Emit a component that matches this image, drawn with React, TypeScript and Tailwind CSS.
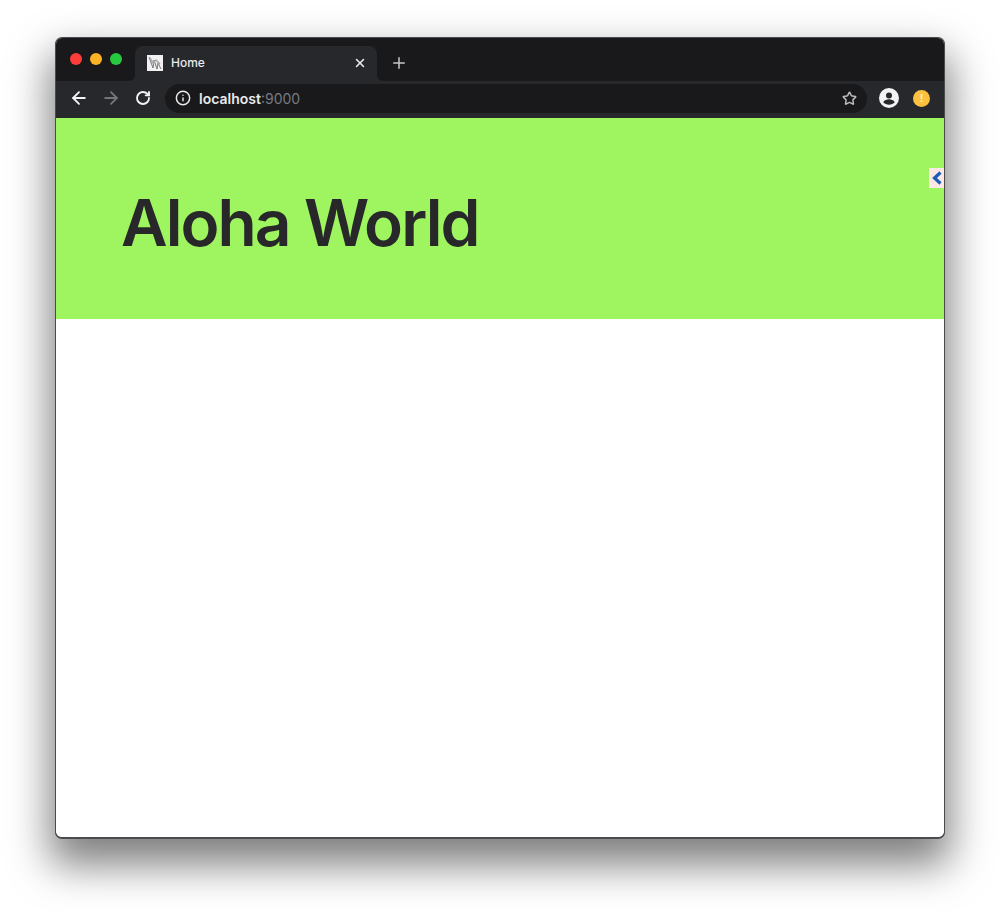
import { ArrowLeft, ArrowRight, Info, Plus, RotateCw, Star, X } from "lucide-react";

function Favicon() {
  return (
    <svg width="16" height="16" viewBox="0 0 16 16" className="shrink-0">
      <rect width="16" height="16" fill="#f1f1f1" />
      <path d="M2 2l4 11 1-8 3 9 1-6 3 6" fill="none" stroke="#777" strokeWidth="1" />
      <path d="M3 3l3 5 3-3 4 4" fill="none" stroke="#aaa" strokeWidth="1.5" />
    </svg>
  );
}

function TabStrip() {
  return (
    <div className="flex h-[43px] bg-[#19191b] rounded-t-[6px]">
      <div className="flex items-center gap-[8px] pl-[13.5px] pb-[2px] w-[79px] shrink-0">
        <span className="h-[12px] w-[12px] rounded-full bg-[#fc3d39]" />
        <span className="h-[12px] w-[12px] rounded-full bg-[#fdb225]" />
        <span className="h-[12px] w-[12px] rounded-full bg-[#27c93f]" />
      </div>
      <div className="relative mt-[8px] flex h-[35px] w-[242px] items-center rounded-t-[8px] bg-[#27282c] pb-[2px] pl-[12px] pr-[10px]">
        <div className="absolute bottom-0 left-[-6px] h-[6px] w-[6px] bg-[#27282c]">
          <div className="h-full w-full rounded-br-[6px] bg-[#19191b]" />
        </div>
        <div className="absolute bottom-0 right-[-6px] h-[6px] w-[6px] bg-[#27282c]">
          <div className="h-full w-full rounded-bl-[6px] bg-[#19191b]" />
        </div>
        <Favicon />
        <span className="ml-[8px] font-['Inter',sans-serif] text-[12px] font-medium text-[#e8eaed]">Home</span>
        <X className="ml-auto h-[14px] w-[14px] text-[#e8eaed]" strokeWidth={2.6} />
      </div>
      <div className="ml-[13px] mt-[16px] h-[18px]">
        <Plus className="h-[18px] w-[18px] text-[#c4c7cc]" strokeWidth={2} />
      </div>
    </div>
  );
}

function Toolbar() {
  return (
    <div className="flex h-[37px] items-center bg-[#27282c] pb-[3px]">
      <div className="flex w-[109px] shrink-0 items-center pl-[13px]">
        <ArrowLeft className="h-[20px] w-[20px] text-[#f1f3f4]" strokeWidth={2.2} />
        <ArrowRight className="ml-[12px] h-[20px] w-[20px] text-[#74767a]" strokeWidth={2.2} />
        <RotateCw className="ml-[14px] h-[16px] w-[16px] text-[#f1f3f4]" strokeWidth={2.8} />
      </div>
      <div className="flex h-[29px] w-[702px] items-center rounded-full bg-[#19191b] pl-[10px] pr-[10px]">
        <Info className="h-[16px] w-[16px] text-[#e8eaed]" strokeWidth={2.2} />
        <span className="ml-[8px] font-['Inter',sans-serif] text-[14px]">
          <span className="font-semibold text-[#e8eaed]">localhost</span>
          <span className="text-[#777a7f]">:9000</span>
        </span>
        <Star className="ml-auto h-[15px] w-[15px] text-[#b8babd]" strokeWidth={2.4} />
      </div>
      <svg width="20" height="20" viewBox="0 0 20 20" className="ml-[12px]">
        <circle cx="10" cy="10" r="10" fill="#f1f3f4" />
        <circle cx="10" cy="7.5" r="3" fill="#27282c" />
        <path d="M4.2 14.2c1.2-2 3.6-2.9 5.8-2.9s4.6.9 5.8 2.9c-1.4 1.6-3.5 2.5-5.8 2.5s-4.4-.9-5.8-2.5z" fill="#27282c" />
      </svg>
      <div className="ml-[14px] flex h-[17px] w-[17px] items-center justify-center rounded-full bg-[#fcc23e] text-[11px] font-bold text-[#fdf1d0]">
        !
      </div>
    </div>
  );
}

export default function App() {
  return (
    <div className="min-h-[911px] bg-white pl-[56px] pt-[38px] font-['Liberation_Sans',Arial,sans-serif]">
      <div className="relative flex h-[799px] w-[888px] flex-col rounded-[6px] bg-white shadow-[0_0_0_1px_#4a4b4f,0_1px_0_1px_#4a4b4f,0_22px_40px_6px_rgba(0,0,0,0.5)]">
        <TabStrip />
        <Toolbar />
        <header className="flex h-[201px] items-center bg-[#9ef55f] pl-[65px] pt-[8px]">
          <h1 className="font-['Inter',sans-serif] text-[64px] font-semibold leading-none tracking-[-1.9px] text-[#28282a]">Aloha World</h1>
        </header>
        <main className="flex-1 rounded-b-[6px] bg-white" />
        <div className="absolute right-0 top-[130px] flex h-[20px] w-[15px] items-center justify-center bg-[#fde8e6]">
          <svg width="12" height="14" viewBox="0 0 12 14">
            <path d="M9.5 1.5L3.5 7l6 5.5" fill="none" stroke="#1b5fb5" strokeWidth="3.2" />
          </svg>
        </div>
      </div>
    </div>
  );
}
